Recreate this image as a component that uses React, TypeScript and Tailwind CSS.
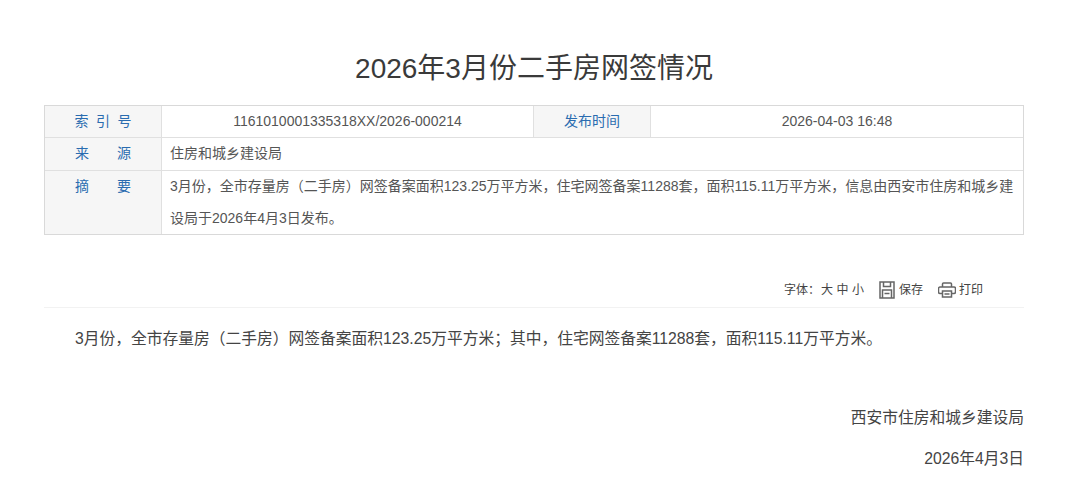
const font = "[font-family:'Liberation_Sans','Noto_Sans_CJK_SC',sans-serif]";

function SaveIcon() {
  return (
    <svg width="16" height="18" viewBox="0 0 16 18" fill="none" stroke="#666" strokeWidth="1.5" className="block">
      <path d="M1 1h14v16H1z" />
      <path d="M4.500 1v4.500h7V1" />
      <path d="M3.500 17V9h9v8" />
      <path d="M5.500 12.500h5" strokeWidth="1.500" />
    </svg>
  );
}

function PrintIcon() {
  return (
    <svg width="18" height="16" viewBox="0 0 18 16" fill="none" stroke="#666" strokeWidth="1.5" className="block">
      <path d="M4.500 5V2a1 1 0 0 1 1-1h7a1 1 0 0 1 1 1v3" />
      <path d="M4 11.500H2a1.500 1.500 0 0 1-1.500-1.500V6.500A1.500 1.500 0 0 1 2 5h14a1.500 1.500 0 0 1 1.500 1.500V10a1.500 1.500 0 0 1-1.500 1.500h-2" />
      <path d="M4.500 9h9v6h-9z" />
      <path d="M6.500 12h5" strokeWidth="1.500" />
    </svg>
  );
}

export default function App() {
  return (
    <div className={`${font} w-[1080px] h-[491px] overflow-hidden bg-white text-[#333]`}>
      <div className="w-[980px] ml-[44px]">
        <h1 className="pt-[47px] h-[105px] text-center text-[28px] leading-[44px] font-normal text-[#3a3a3a]">
          2026年3月份二手房网签情况
        </h1>

        <div className="border border-[#d9d9d9] text-[14px] text-[#555]">
          <div className="flex h-[32px] border-b border-[#e0e0e0]">
            <div className="w-[117px] shrink-0 bg-[#f6f6f6] border-r border-[#e0e0e0] text-[#2a6cb0] flex items-center justify-center gap-[7.5px]">
              <span>索</span>
              <span>引</span>
              <span>号</span>
            </div>
            <div className="w-[372px] shrink-0 flex items-center justify-center border-r border-[#e0e0e0]">
              1161010001335318XX/2026-000214
            </div>
            <div className="w-[117px] shrink-0 bg-[#f6f6f6] border-r border-[#e0e0e0] text-[#2a6cb0] flex items-center justify-center">
              发布时间
            </div>
            <div className="flex-1 flex items-center justify-center">2026-04-03 16:48</div>
          </div>

          <div className="flex h-[33px] border-b border-[#e0e0e0]">
            <div className="w-[117px] shrink-0 bg-[#f6f6f6] border-r border-[#e0e0e0] text-[#2a6cb0] flex items-center justify-center gap-[28px] pb-[2px]">
              <span>来</span>
              <span>源</span>
            </div>
            <div className="flex-1 flex items-center px-[8px] pb-[2px]">住房和城乡建设局</div>
          </div>

          <div className="flex h-[63px]">
            <div className="w-[117px] shrink-0 bg-[#f6f6f6] border-r border-[#e0e0e0] text-[#2a6cb0] flex justify-center gap-[28px] leading-[30px]">
              <span>摘</span>
              <span>要</span>
            </div>
            <div className="flex-1 px-[8px] -mt-px leading-[32px]">
              3月份，全市存量房（二手房）网签备案面积123.25万平方米，住宅网签备案11288套，面积115.11万平方米，信息由西安市住房和城乡建设局于2026年4月3日发布。
            </div>
          </div>
        </div>

        <div className="mt-[44px] h-[29px] border-b border-[#f2f2f2] flex items-start justify-end pr-[41px] text-[12px] text-[#444]">
          <div className="flex items-center h-[22px]">
            <span>字体：</span>
            <span className="flex gap-[3.5px] ml-[1px]">
              <span>大</span>
              <span>中</span>
              <span>小</span>
            </span>
            <span className="ml-[15px] mr-[4px]">
              <SaveIcon />
            </span>
            <span>保存</span>
            <span className="ml-[15px] mr-[3px]">
              <PrintIcon />
            </span>
            <span>打印</span>
          </div>
        </div>

        <p className="mt-[16px] pl-[31px] text-[15.75px] leading-[30px] text-[#444]">
          3月份，全市存量房（二手房）网签备案面积123.25万平方米；其中，住宅网签备案11288套，面积115.11万平方米。
        </p>

        <p className="mt-[49px] text-right text-[15.75px] leading-[30px] text-[#444]">西安市住房和城乡建设局</p>
        <p className="mt-[11px] text-right text-[15.75px] leading-[30px] text-[#444]">2026年4月3日</p>
      </div>
    </div>
  );
}
